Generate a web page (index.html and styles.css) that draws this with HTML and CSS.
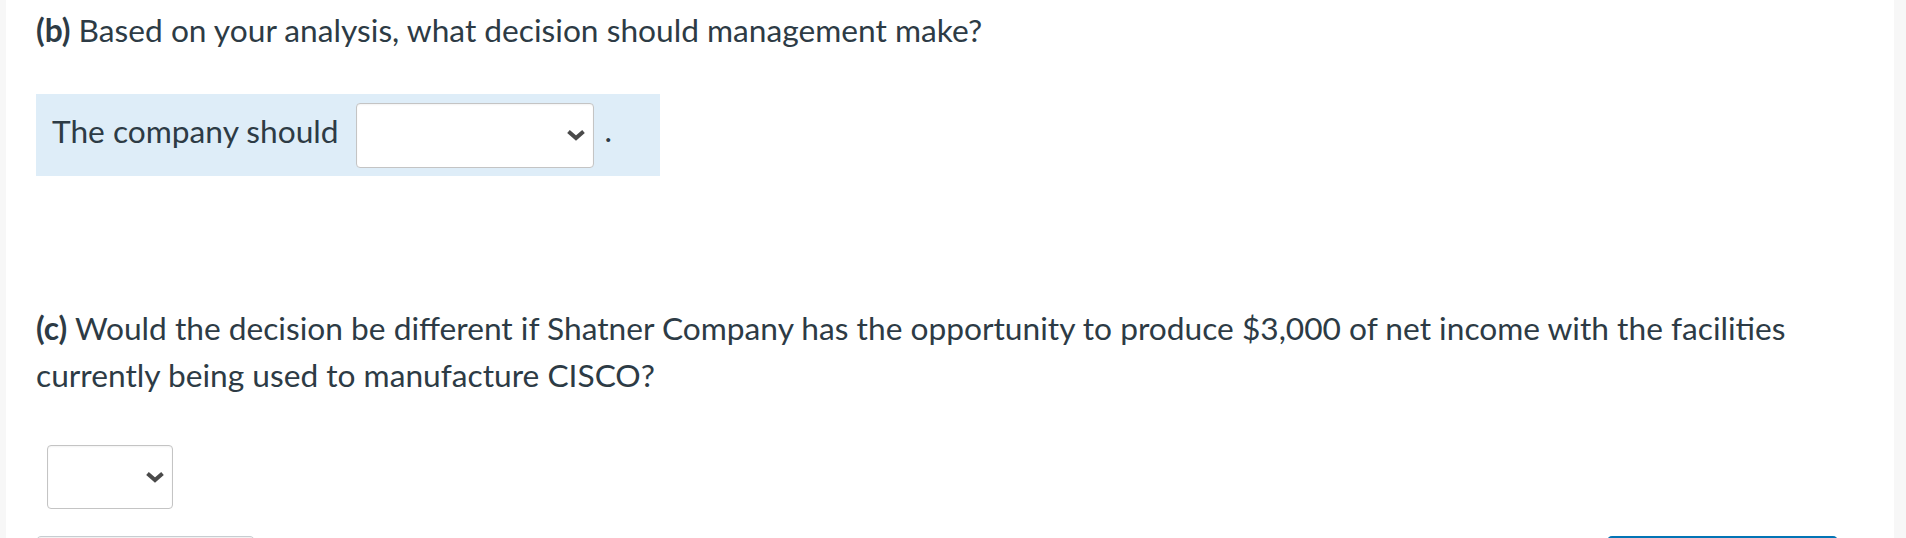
FILE: index.html
```html
<!DOCTYPE html>
<html>
<head>
<meta charset="utf-8">
<link rel="stylesheet" href="styles.css">
</head>
<body>
<div class="page">
  <div class="gutter-left"></div>
  <div class="main">
    <p class="q q-b"><strong>(b)</strong> Based on your analysis, what decision should management make?</p>
    <div class="answer-box">
      <span class="label">The company should</span>
      <div class="select select-wide">
        <svg class="chev" width="20" height="12" viewBox="0 0 20 12"><polyline points="2.5,2.5 10,9 17.5,2.5" fill="none" stroke="#4a4a4a" stroke-width="4" stroke-linecap="butt" stroke-linejoin="miter"/></svg>
      </div>
      <span class="dot">.</span>
    </div>
    <p class="q q-c"><strong>(c)</strong> Would the decision be different if Shatner Company has the opportunity to produce $3,000 of net income with the facilities currently being used to manufacture CISCO?</p>
    <div class="select select-small">
      <svg class="chev" width="20" height="12" viewBox="0 0 20 12"><polyline points="2.5,2.5 10,9 17.5,2.5" fill="none" stroke="#4a4a4a" stroke-width="4" stroke-linecap="butt" stroke-linejoin="miter"/></svg>
    </div>
    <div class="buttons">
      <div class="btn btn-gray"></div>
      <div class="btn btn-blue"></div>
    </div>
  </div>
  <div class="gutter-right"></div>
</div>
</body>
</html>
```
FILE: styles.css
```css
html, body {
  margin: 0;
  padding: 0;
  background: #ffffff;
  height: 538px;
  overflow: hidden;
}
body {
  font-family: Lato, "Open Sans", sans-serif;
  color: #2d3b45;
}
.page {
  display: flex;
  height: 538px;
}
.gutter-left {
  width: 6px;
  background: #f7f7f7;
  flex: none;
}
.gutter-right {
  width: 12px;
  background: #f7f7f7;
  flex: none;
}
.main {
  flex: 1;
  padding-left: 30px;
  padding-right: 56px;
  display: flex;
  flex-direction: column;
  align-items: flex-start;
}
.main > * {
  flex-shrink: 0;
}
.q {
  margin: 0;
  font-size: 31.7px;
  line-height: 47px;
}
.q strong {
  font-weight: 700;
}
.q-b {
  margin-top: 7px;
}
.answer-box {
  margin-top: 40px;
  width: 624px;
  box-sizing: border-box;
  height: 82px;
  background: #deedf8;
  display: flex;
  align-items: center;
  padding-left: 16px;
  font-size: 31.7px;
}
.label {
  margin-right: 17px;
  margin-bottom: 8px;
  line-height: 38px;
}
.select {
  box-sizing: border-box;
  background: #ffffff;
  border: 1.5px solid #c4c4c4;
  border-radius: 4px;
  box-shadow: inset 0 1px 2px rgba(0, 0, 0, 0.05);
  display: flex;
  align-items: center;
  justify-content: flex-end;
  padding-right: 7px;
}
.select-wide {
  width: 238px;
  height: 65px;
}
.select-small {
  width: 126px;
  height: 64px;
  margin-top: 46px;
  margin-left: 11px;
}
.dot {
  margin-left: 11px;
  margin-bottom: 10px;
  line-height: 38px;
}
.q-c {
  margin-top: 129px;
}
.buttons {
  margin-top: 27px;
  display: flex;
  justify-content: space-between;
  align-self: stretch;
}
.btn {
  height: 20px;
  border-radius: 5px;
}
.btn-gray {
  width: 219px;
  background: #f2f2f2;
  border: 1px solid #c7cdd1;
  box-sizing: border-box;
}
.btn-blue {
  width: 231px;
  background: #0374b5;
}
```
